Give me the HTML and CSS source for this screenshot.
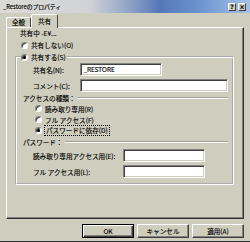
FILE: index.html
```html
<!DOCTYPE html>
<html lang="ja">
<head>
<meta charset="utf-8">
<title>_Restoreのプロパティ</title>
<link rel="stylesheet" href="styles.css">
</head>
<body>
<div class="window">
  <div class="titlebar">
    <span class="title">_Restoreのプロパティ</span>
    <div class="caption-btns">
      <span class="cbtn">?</span>
      <span class="cbtn">×</span>
    </div>
  </div>
  <div class="tabs">
    <div class="tab">全般</div>
    <div class="tab active">共有</div>
  </div>
  <div class="panel">
    <div class="status">共有中 -E¥...</div>
    <div class="radio top"><span class="dot"></span>共有しない(O)</div>
    <fieldset class="group">
      <legend><span class="radio"><span class="dot on"></span>共有する(S)</span></legend>
      <div class="frow first"><span class="flabel">共有名(N):</span><div class="input short">_RESTORE</div></div>
      <div class="frow comment"><span class="flabel">コメント(C):</span><div class="input wide"></div></div>
      <div class="subhead access"><span>アクセスの種類：</span><span class="rule"></span></div>
      <div class="radio sub"><span class="dot"></span>読み取り専用(R)</div>
      <div class="radio sub"><span class="dot"></span>フル アクセス(F)</div>
      <div class="radio sub"><span class="dot on"></span><span class="focus">パスワードに依存(D)</span></div>
      <div class="subhead pw"><span>パスワード：</span><span class="rule"></span></div>
      <div class="frow pw1"><span class="flabel long">読み取り専用アクセス用(E):</span><div class="input mid"></div></div>
      <div class="frow pw2"><span class="flabel long">フル アクセス用(L):</span><div class="input mid"></div></div>
    </fieldset>
  </div>
  <div class="buttons">
    <div class="btn default">OK</div>
    <div class="btn">キャンセル</div>
    <div class="btn">適用(A)</div>
  </div>
</div>
</body>
</html>
```
FILE: styles.css
```css
* { box-sizing: border-box; }
html, body { margin: 0; padding: 0; }
body {
  width: 250px;
  height: 242px;
  overflow: hidden;
  background: #cfcebe;
  font-family: "Noto Sans CJK JP", "Noto Sans", sans-serif;
  font-size: 6.6px;
  color: #000;
  -webkit-text-stroke: 0.15px #000;
}
.window {
  width: 250px;
  height: 242px;
  display: flex;
  flex-direction: column;
  background: #cfcebe;
  border-bottom: 1px solid #303030;
}
.titlebar {
  height: 13px;
  display: flex;
  align-items: center;
  justify-content: space-between;
  padding: 0 4px 0 3px;
  background: linear-gradient(to right, #dcdcd6 0%, #d0d2d6 36%, #8ea2c6 52%, #5577b8 64%, #6d94cf 80%, #a4c2e8 100%);
}
.title { font-size: 5.8px; line-height: 13px; }
.caption-btns { display: flex; gap: 2px; }
.cbtn {
  width: 8px;
  height: 8px;
  background: #cfcebe;
  border: 1px solid;
  border-color: #fff #404040 #404040 #fff;
  font-family: "DejaVu Sans", sans-serif;
  font-size: 6px;
  font-weight: bold;
  line-height: 6px;
  display: flex;
  align-items: center;
  justify-content: center;
}
.tabs {
  display: flex;
  align-items: flex-end;
  margin: 1px 0 0 6px;
  height: 13px;
  position: relative;
  z-index: 1;
}
.tab {
  width: 25px;
  height: 10px;
  border: 1px solid;
  border-bottom: none;
  border-color: #fff #404040 transparent #fff;
  border-radius: 2px 2px 0 0;
  text-align: center;
  line-height: 9px;
}
.tab.active {
  width: 27px;
  height: 14px;
  margin-bottom: -1px;
  background: #cfcebe;
  line-height: 12px;
}
.panel {
  margin-left: 6px;
  width: 238px;
  height: 192px;
  border: 1px solid;
  border-color: #fff #303030 #303030 #fff;
  box-shadow: inset -1px -1px 0 #808080;
  padding: 0 9px 0 8px;
  display: flex;
  flex-direction: column;
}
.status { height: 10px; line-height: 10px; margin-left: 5px; }
.radio { display: flex; align-items: center; height: 10px; line-height: 10px; }
.radio.top { margin: 2px 0 0 6px; }
.dot {
  width: 7px;
  height: 7px;
  border-radius: 50%;
  background: #fff;
  border: 1px solid;
  border-color: #808080 #fff #fff #808080;
  box-shadow: inset 1px 1px 0 #404040;
  margin-right: 3px;
  flex: none;
}
.dot.on { background: radial-gradient(circle, #000 1.3px, #fff 1.7px); }
.group {
  margin: 2px 0 0 0;
  padding: 0 0 5px 0;
  border: 2px groove #ffffff;
  min-width: 0;
  display: flex;
  flex-direction: column;
}
.group legend { padding: 0 1px; margin-left: 3px; height: 10px; }
.frow { display: flex; align-items: center; height: 13px; padding-left: 16px; }
.frow.first { margin-top: 1px; }
.frow.comment { margin-top: 3px; }
.frow.pw1 { margin-top: 2px; }
.frow.pw2 { margin-top: 3px; }
.flabel { width: 47px; flex: none; }
.flabel.long { width: 90px; }
.input {
  height: 13px;
  background: #fff;
  border: 1px solid;
  border-color: #808080 #fff #fff #808080;
  box-shadow: inset 1px 1px 0 #404040, inset -1px -1px 0 #cfcebe;
  padding-left: 3px;
  line-height: 11px;
  font-family: "Noto Sans", sans-serif;
}
.input.short { width: 82px; }
.input.wide { flex: 1; margin-right: 4px; }
.input.mid { width: 82px; }
.subhead { display: flex; align-items: center; height: 10px; margin: 1px 4px 0 6px; gap: 2px; }
.rule { flex: 1; height: 2px; border-top: 1px solid #a0a098; border-bottom: 1px solid #fff; }
.radio.sub { height: 11px; margin-left: 18px; }
.focus { outline: 1px dotted #000; padding: 0 1px; line-height: 9px; }
.buttons {
  display: flex;
  justify-content: flex-end;
  gap: 3px;
  margin-top: 5px;
  padding-right: 6px;
}
.btn {
  width: 52px;
  height: 14px;
  border: 1px solid;
  border-color: #fff #404040 #404040 #fff;
  box-shadow: inset -1px -1px 0 #808080;
  display: flex;
  align-items: center;
  justify-content: center;
}
.btn.default {
  border-color: #000;
  box-shadow: inset 1px 1px 0 #fff, inset -1px -1px 0 #404040, inset -2px -2px 0 #808080;
}
```
